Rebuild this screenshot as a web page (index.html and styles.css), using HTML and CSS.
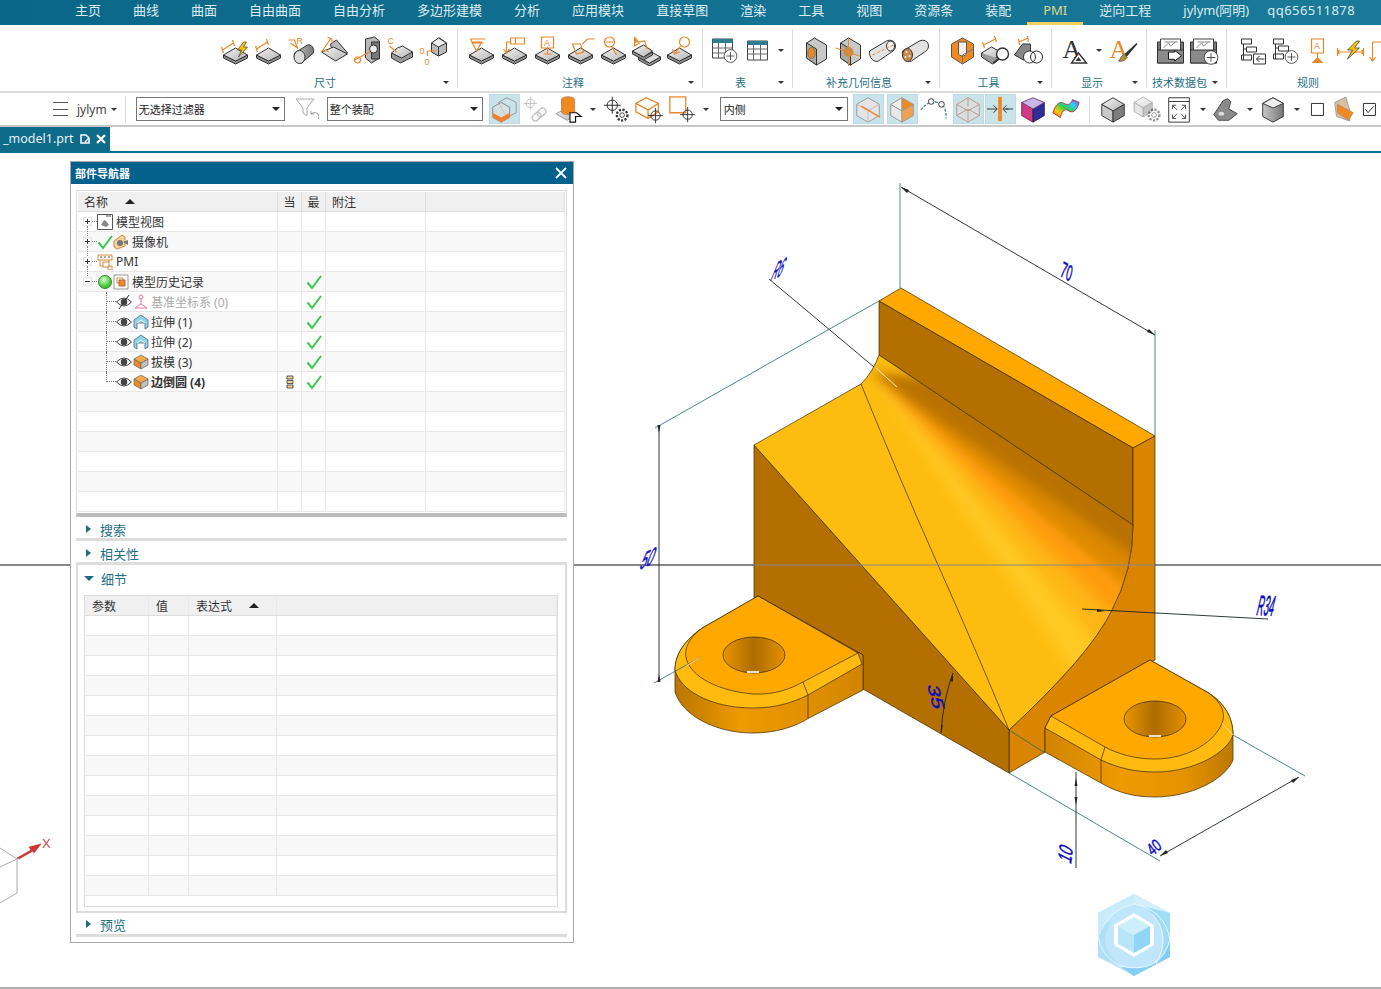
FILE: index.html
```html
<!DOCTYPE html>
<html>
<head>
  <title>PMI - _model1.prt</title>
  <meta charset="utf-8">
  <link rel="stylesheet" href="styles.css">
</head>
<body>
  <!-- shared icon parts -->
  <svg class="defs" width="0" height="0">
    <defs>
      <linearGradient id="gSlab" x1="0" y1="0" x2="1" y2="1"><stop offset="0" stop-color="#f4f4f4"/><stop offset="1" stop-color="#b4b4b4"/></linearGradient>
      <linearGradient id="gSide" x1="0" y1="0" x2="1" y2="0"><stop offset="0" stop-color="#c8c8c8"/><stop offset="1" stop-color="#777"/></linearGradient>
      <linearGradient id="gHole" x1="0" y1="0" x2="1" y2="0"><stop offset="0" stop-color="#e89400"/><stop offset=".5" stop-color="#ad6c00"/><stop offset="1" stop-color="#e49000"/></linearGradient>
      <linearGradient id="gWallL" gradientUnits="userSpaceOnUse" x1="675" y1="0" x2="863" y2="0"><stop offset="0" stop-color="#ba7600"/><stop offset=".35" stop-color="#ee9a00"/><stop offset=".7" stop-color="#e09000"/><stop offset="1" stop-color="#d08400"/></linearGradient>
      <linearGradient id="gWallR" gradientUnits="userSpaceOnUse" x1="1045" y1="0" x2="1233" y2="0"><stop offset="0" stop-color="#d08400"/><stop offset=".4" stop-color="#ee9a00"/><stop offset=".75" stop-color="#e49200"/><stop offset="1" stop-color="#bd7800"/></linearGradient>
      <filter id="soft" x="-20%" y="-20%" width="140%" height="140%"><feGaussianBlur stdDeviation="6"/></filter>
      <clipPath id="slopeClip"><path d="M754 445 861 384Q873 372 879 355L1133 525Q1133 570 1112 610 1090 655 1009 730Z"/></clipPath>
      <symbol id="slab" viewBox="0 0 32 32">
        <path d="M4 21v3l12 6 12-6v-3l-12 6Z" fill="#8f8f8f" stroke="#333"/>
        <path d="M4 21 16 14l12 7-12 6Z" fill="url(#gSlab)" stroke="#333"/>
      </symbol>
      <symbol id="cube" viewBox="0 0 32 32">
        <path d="M4 11v12l12 7V18Z" fill="#c8c8c8" stroke="#333"/>
        <path d="M28 11v12l-12 7V18Z" fill="#7d7d7d" stroke="#333"/>
        <path d="M4 11 16 4l12 7-12 7Z" fill="url(#gSlab)" stroke="#333"/>
      </symbol>
      <symbol id="cross" viewBox="0 0 20 20">
        <circle cx="10" cy="10" r="5.5" fill="none" stroke="#222"/>
        <path d="M10 1v18M1 10h18" stroke="#222" fill="none"/>
      </symbol>
      <symbol id="plus" viewBox="0 0 20 20">
        <circle cx="10" cy="10" r="8" fill="#fff" stroke="#333"/>
        <path d="M10 5v10M5 10h10" stroke="#333"/>
      </symbol>
      <symbol id="gear" viewBox="0 0 20 20">
        <circle cx="10" cy="10" r="6" fill="#fff" stroke="#333" stroke-width="2.6" stroke-dasharray="2.4 1.6"/>
        <circle cx="10" cy="10" r="2.6" fill="#fff" stroke="#333"/>
      </symbol>
      <symbol id="eye" viewBox="0 0 16 16">
        <path d="M.5 8q7.5-8 15 0-7.5 8-15 0Z" fill="#f2f2f2" stroke="#444"/>
        <circle cx="8" cy="8" r="3.2" fill="#444"/>
      </symbol>
      <symbol id="check" viewBox="0 0 16 16">
        <path d="M1.5 8.5 6 14 15 2" fill="none" stroke="#36c84a" stroke-width="2"/>
      </symbol>
      <symbol id="solid" viewBox="0 0 16 16">
        <path d="M1 5v6l7 4V9Z" fill="#f08a1e" stroke="#666" stroke-width=".7"/>
        <path d="M15 5v6l-7 4V9Z" fill="#c2c2c2" stroke="#666" stroke-width=".7"/>
        <path d="M1 5l7-4 7 4-7 4Z" fill="#f6a94a" stroke="#666" stroke-width=".7"/>
      </symbol>
      <symbol id="extrude" viewBox="0 0 16 16">
        <path d="M1 6v7l3 2V9h8v6l3-2V6L8 1Z" fill="#8fd2ea" stroke="#4a6a78" stroke-width=".8"/>
        <path d="M4 9l4-3 4 3" fill="none" stroke="#fff"/>
      </symbol>
    </defs>
  </svg>

  <nav class="menu-bar">
    <a>主页</a><a>曲线</a><a>曲面</a><a>自由曲面</a><a>自由分析</a><a>多边形建模</a><a>分析</a><a>应用模块</a><a>直接草图</a><a>渲染</a><a>工具</a><a>视图</a><a>资源条</a><a>装配</a><a class="active">PMI</a><a>逆向工程</a><a>jylym(阿明)</a><a class="menu-qq">qq656511878</a>
  </nav>

  <section class="ribbon">
    <div class="group group-first">
      <div class="group-icons">
        <svg class="ico" viewBox="0 0 32 32"><use href="#slab"/><path d="M3 16l11-7M2 13l2 6M13 6l2 6" class="or"/><path d="M24 8l-6 8h4l-3 7 9-10h-4l3-5Z" fill="#f6c400" stroke="#444" stroke-width=".7"/></svg>
        <svg class="ico" viewBox="0 0 32 32"><use href="#slab"/><path d="M4 15l11-7M3 12l2 6M14 5l2 6" class="or"/></svg>
        <svg class="ico" viewBox="0 0 32 32"><path d="M9 19 22 11c4-1 7 3 6 8l-12 10c-5 1-8-5-7-10Z" fill="url(#gSide)" stroke="#333"/><ellipse cx="14" cy="23" rx="5.5" ry="6.5" fill="#ddd" stroke="#333"/><path d="M3 6h6l3 8-7-5" class="or"/><text x="11" y="10" class="ico-text">R</text></svg>
        <svg class="ico" viewBox="0 0 32 32"><path d="M12 10 18 6l11 13-13 7Z" fill="#bbb" stroke="#333"/><path d="M3 18l12-5 14 7-12 7Z" fill="url(#gSlab)" stroke="#333"/><path d="M3 18 12 5M9 3l4 2 1 4M5 17c3-2 4 0 5 1" class="or"/></svg>
        <svg class="ico" viewBox="0 0 32 32"><path d="M14 5l9-2 5 4v17l-8 5-6-5Z" fill="#b9b9b9" stroke="#333"/><path d="M20 8h8v17h-8Z" fill="#777" stroke="#333"/><circle cx="22" cy="15" r="4" fill="#eee" stroke="#333"/><path d="M3 26l15-8" class="or"/><circle cx="6" cy="26" r="3" class="or"/></svg>
        <svg class="ico" viewBox="0 0 32 32"><path d="M7 19v5l9 5 12-6v-5Z" fill="#999" stroke="#333"/><path d="M7 19l6-5 5-2 10 6-9 5-2 1Z" fill="url(#gSlab)" stroke="#333"/><path d="M5 12l7 6" class="or"/><text x="3" y="10" class="ico-text">C</text></svg>
        <svg class="ico" viewBox="0 0 32 32"><path d="M14 9v9l7 4 8-4V9l-7-5Z" fill="#bbb" stroke="#333"/><path d="M14 9l7-5 8 5-8 4Z" fill="#eee" stroke="#333"/><path d="M21 13v9" stroke="#333"/><path d="M10 17h8M10 17v5" class="or"/><text x="2" y="20" class="ico-text">0</text><text x="7" y="31" class="ico-text">0</text></svg>
      </div>
      <div class="group-foot"><span>尺寸</span><i class="caret"></i></div>
    </div>
    <div class="group">
      <div class="group-icons">
        <svg class="ico" viewBox="0 0 32 32"><use href="#slab"/><path d="M5 5h15M6 9h12M5 5l6 12 5-9H6" class="or"/></svg>
        <svg class="ico" viewBox="0 0 32 32"><use href="#slab"/><path d="M12 4h14v6H12ZM17 4v6M12 8H8v10" class="or"/><path d="M5 15l3 4 3-4" class="or"/></svg>
        <svg class="ico" viewBox="0 0 32 32"><use href="#slab"/><path d="M10 3h12v11H10ZM16 14v6M12 20h8" class="or"/><text x="12.5" y="12" class="ico-text">A</text></svg>
        <svg class="ico" viewBox="0 0 32 32"><use href="#slab"/><path d="M8 10h8l3 8-7 2ZM18 10l5-5h7" class="or"/></svg>
        <svg class="ico" viewBox="0 0 32 32"><use href="#slab"/><circle cx="12" cy="8" r="5" class="or"/><path d="M8 8h8M14 12l5 9" class="or"/></svg>
        <svg class="ico" viewBox="0 0 32 32"><path d="M8 23v3l11 6 11-6v-3l-11 6Z" fill="#8f8f8f" stroke="#333"/><path d="M8 23l11-6 11 6-11 6Z" fill="#ddd" stroke="#333"/><path d="M2 17v3l11 6 9-5v-3l-9 5Z" fill="#8f8f8f" stroke="#333"/><path d="M2 17l11-6 9 6-9 6Z" fill="url(#gSlab)" stroke="#333"/><path d="M4 3l4 5 6-1 3 8M4 3v9l5-3" class="or"/><path d="M4 4l4 4-4 1Z" fill="#e8882a"/></svg>
        <svg class="ico" viewBox="0 0 32 32"><use href="#slab"/><circle cx="21" cy="8" r="5" class="or"/><path d="M17 12l-5 7M9 15l2 5 5-2" class="or"/></svg>
      </div>
      <div class="group-foot"><span>注释</span><i class="caret"></i></div>
    </div>
    <div class="group">
      <div class="group-icons">
        <svg class="ico" viewBox="0 0 32 32"><path d="M4 5h20v19H4Z" fill="#fff" stroke="#444"/><path d="M4 5h20v4H4Z" fill="#2f7d94"/><path d="M4 14h20M4 19h20M10 9v15M17 9v15" stroke="#666"/><use href="#plus" x="14" y="14" width="16" height="16"/></svg>
        <svg class="ico" viewBox="0 0 32 32"><path d="M6 7h20v19H6Z" fill="#fff" stroke="#444"/><path d="M6 7h20v4H6Z" fill="#2f7d94"/><path d="M6 15h20M6 20h20M12 11v15M19 11v15" stroke="#666"/></svg>
        <i class="caret caret-up"></i>
      </div>
      <div class="group-foot"><span>表</span><i class="caret"></i></div>
    </div>
    <div class="group">
      <div class="group-icons">
        <svg class="ico" viewBox="0 0 32 32"><path d="M6 9l8-5 12 7v14l-10 6-10-7Z" fill="#c8c8c8" stroke="#333"/><path d="M6 9l10 6v16l-10-7Z" fill="#aaa" stroke="#333"/><ellipse cx="11" cy="19" rx="3.6" ry="5.5" fill="#e8882a" stroke="#874"/></svg>
        <svg class="ico" viewBox="0 0 32 32"><path d="M7 9l8-5 12 7v14l-10 6-10-7Z" fill="#c8c8c8" stroke="#333"/><path d="M7 9l10 6v16l-10-7Z" fill="#aaa" stroke="#333"/><circle cx="15" cy="18" r="5" fill="#c98a48"/><path d="M2 14l24 8M15 4v28" stroke="#e8882a"/></svg>
        <svg class="ico" viewBox="0 0 32 32"><path d="M3 17 20 7c4-2 9 0 9 5 0 3-2 5-4 6L12 27c-5 2-10-4-9-10Z" fill="#e2e2e2" stroke="#333"/><ellipse cx="24" cy="12" rx="4" ry="5" fill="#f2f2f2" stroke="#333"/><path d="M6 21 27 11" stroke="#e8882a" stroke-dasharray="3 2"/></svg>
        <svg class="ico" viewBox="0 0 32 32"><path d="M3 17 20 7c4-2 9 0 9 5 0 3-2 5-4 6L12 27c-5 2-10-4-9-10Z" fill="#e2e2e2" stroke="#333"/><ellipse cx="8" cy="21" rx="5" ry="6.5" fill="#c98a48" stroke="#333"/><circle cx="7" cy="18" r="1" fill="#fff"/><circle cx="10" cy="22" r="1" fill="#fff"/><circle cx="6" cy="23" r="1" fill="#fff"/></svg>
      </div>
      <div class="group-foot"><span>补充几何信息</span><i class="caret"></i></div>
    </div>
    <div class="group">
      <div class="group-icons">
        <svg class="ico" viewBox="0 0 32 32"><path d="M5 10l11-6 11 6v13l-11 7-11-7Z" fill="#f08a1e" stroke="#555"/><path d="M12 8h8v11c0 4-8 4-8 0Z" fill="#eee" stroke="#555"/><path d="M16 30V21l11-6" stroke="#777" fill="none"/></svg>
        <svg class="ico" viewBox="0 0 32 32"><path d="M2 19l10-6 11 6-10 7Z" fill="url(#gSlab)" stroke="#333"/><path d="M2 19v4l11 7 7-5" fill="#999" stroke="#333"/><path d="M4 11l12-6M3 8l2 6M15 2l2 6" class="or"/><circle cx="23" cy="20" r="6" fill="#fff" stroke="#333" stroke-width="1.4"/><path d="M19 25l-5 4" stroke="#333" stroke-width="2"/></svg>
        <svg class="ico" viewBox="0 0 32 32"><path d="M2 21 10 10h8v10l-7 6Z" fill="#888" stroke="#333"/><path d="M6 8l10-4M6 5l1 6M15 2l1 6" class="or"/><circle cx="17" cy="23" r="6" fill="#fff" stroke="#222" stroke-opacity=".9"/><circle cx="24" cy="23" r="6" fill="none" stroke="#222"/></svg>
      </div>
      <div class="group-foot"><span>工具</span><i class="caret"></i></div>
    </div>
    <div class="group">
      <div class="group-icons">
        <svg class="ico" viewBox="0 0 32 32"><text x="3" y="24" class="ico-big">A</text><path d="M19 19l8 10H12Z" fill="#fff" stroke="#333" stroke-width="1.4"/><path d="M19 23l3 4h-6Z" fill="#333"/></svg>
        <i class="caret caret-up"></i>
        <svg class="ico" viewBox="0 0 32 32"><text x="3" y="24" class="ico-big ico-orange">A</text><path d="M30 9 18 20l2 3 11-13Z" fill="#333"/><path d="M18 20c-3 1-3 4-6 7 4 1 8-1 8-4Z" fill="#b89238" stroke="#765"/></svg>
      </div>
      <div class="group-foot"><span>显示</span><i class="caret"></i></div>
    </div>
    <div class="group">
      <div class="group-icons">
        <svg class="ico" viewBox="0 0 32 32"><path d="M3 8h26v21H3Z" fill="#777" stroke="#333"/><path d="M6 5h20v15H6Z" fill="#fff" stroke="#444"/><path d="M9 14l5-5 2 3 5-4M10 8h13" stroke="#888" fill="none"/><path d="M3 16h26v13H3Z" fill="#8a8a8a" stroke="#333"/><path d="M16 19h6v-2l7 6-7 6v-2h-6Z" transform="translate(-2 1) scale(1 .9)" fill="#fff" stroke="#111"/></svg>
        <svg class="ico" viewBox="0 0 32 32"><path d="M3 8h26v21H3Z" fill="#777" stroke="#333"/><path d="M6 5h20v15H6Z" fill="#fff" stroke="#444"/><path d="M9 14l5-5 2 3 5-4M10 8h13" stroke="#888" fill="none"/><path d="M3 16h26v13H3Z" fill="#8a8a8a" stroke="#333"/><use href="#plus" x="15" y="15" width="17" height="17"/></svg>
      </div>
      <div class="group-foot"><span>技术数据包</span><i class="caret"></i></div>
    </div>
    <div class="group group-last">
      <div class="group-icons">
        <svg class="ico" viewBox="0 0 32 32"><path d="M6 5h10v5H6ZM11 13h10v5H11ZM6 21h10v5H6ZM8 10v16M8 15h3" fill="#fff" stroke="#333"/><path d="M18 20h12v10H18Z" fill="#fff" stroke="#333"/><path d="M21 25h8M24 22l-3 3 3 3" fill="none" stroke="#333"/></svg>
        <svg class="ico" viewBox="0 0 32 32"><path d="M5 5h10v5H5ZM10 12h10v5H10ZM5 20h10v5H5ZM7 10v15M7 14h3" fill="#fff" stroke="#333"/><use href="#plus" x="15" y="15" width="16" height="16"/></svg>
        <svg class="ico" viewBox="0 0 32 32"><path d="M10 5h12v14H10Z" fill="#fff" class="or"/><path d="M16 19v7" class="or"/><path d="M10 29l6-6 6 6Z" fill="#e8882a"/><text x="12.5" y="15" class="ico-text">A</text></svg>
        <svg class="ico" viewBox="0 0 32 32"><path d="M3 18h26M3 14v8M29 14v8M5 16l-2 2 2 2M27 16l2 2-2 2" class="or"/><path d="M22 7l-9 9h5l-5 9 12-11h-5l5-7Z" fill="#f6c400" stroke="#444" stroke-width=".8"/></svg>
        <svg class="ico" viewBox="0 0 32 32"><path d="M5 8V26M2 23l3 4 3-4M5 8h10" class="or"/></svg>
      </div>
      <div class="group-foot"><span>规则</span></div>
    </div>
  </section>

  <section class="toolbar">
    <span class="burger"></span>
    <span class="role">jylym</span><i class="caret caret-role"></i>
    <span class="bar-sep sep-role"></span>
    <div class="select select-filter"><span>无选择过滤器</span><i class="caret caret-dark"></i></div>
    <svg class="funnel" viewBox="0 0 24 24"><path d="M1 2h18l-7 9v8l-4-3v-5Z" fill="#fff" stroke="#aaa"/><path d="M23 22a4 4 0 0 0-5-6l-2 1m0-3v3h3" fill="none" stroke="#999"/></svg>
    <div class="select select-scope"><span>整个装配</span><i class="caret caret-dark"></i></div>

    <button class="tool on"><svg class="ico" viewBox="0 0 32 32"><path d="M10 9l9-5 10 5v11l-10 5Z" fill="none" stroke="#999"/><path d="M4 14l9-5 9 5v11l-9 5-9-5Z" fill="#ddd" fill-opacity=".6" stroke="#888"/><path d="M4 20l9 5 9-5v5l-9 5-9-5Z" fill="#f5822a"/></svg></button>
    <button class="tool"><svg class="ico" viewBox="0 0 32 32" opacity=".35"><use href="#cross" x="2" y="2" width="16" height="16"/><g transform="rotate(-40 20 22)"><rect x="11" y="18" width="10" height="7" rx="3.5" fill="none" stroke="#555" stroke-width="1.5"/><rect x="18" y="18" width="10" height="7" rx="3.5" fill="none" stroke="#555" stroke-width="1.5"/></g></svg></button>
    <button class="tool"><svg class="ico" viewBox="0 0 32 32"><path d="M2 21l12-6 12 6-12 7Z" fill="url(#gSlab)" stroke="#999"/><path d="M8 6c0-4 14-4 14 0v13c0 4-14 4-14 0Z" fill="#f08a1e" stroke="#b86"/><path d="M17 30V20h7l5 4h-6v6Z" fill="#fff" stroke="#111" stroke-width="1.2"/></svg></button>
    <i class="caret caret-box"></i>
    <button class="tool"><svg class="ico" viewBox="0 0 32 32"><use href="#cross" x="2" y="2" width="20" height="20"/><use href="#gear" x="13" y="13" width="19" height="19"/></svg></button>
    <button class="tool"><svg class="ico" viewBox="0 0 32 32"><path d="M2 10l11-6 13 6v9l-11 7-13-7Z" fill="#fff" stroke="#e8882a" stroke-width="1.4"/><path d="M2 10l13 7 11-7M15 17v9" fill="none" stroke="#e8882a" stroke-width="1.4"/><use href="#cross" x="14" y="14" width="18" height="18"/></svg></button>
    <button class="tool"><svg class="ico" viewBox="0 0 32 32"><path d="M3 3h17v17H3Z" fill="#fff" stroke="#e8882a" stroke-width="1.4"/><use href="#cross" x="13" y="13" width="18" height="18"/></svg></button>
    <i class="caret caret-box"></i>
    <div class="select select-side"><span>内侧</span><i class="caret caret-dark"></i></div>

    <button class="tool on"><svg class="ico" viewBox="0 0 32 32"><path d="M4 11v12l12 7 12-7V11L16 4Z" fill="#e4e4e4" stroke="#999"/><path d="M4 11l12 7 12-7M16 18v12" fill="none" stroke="#bbb"/><path d="M9 13l20 12" stroke="#e8882a" stroke-width="1.5"/></svg></button>
    <button class="tool on tight"><svg class="ico" viewBox="0 0 32 32"><path d="M4 11v12l12 7V18Z" fill="#e8e8e8" stroke="#999"/><path d="M16 4 4 11l12 7Z" fill="#eee" stroke="#999"/><path d="M28 11v12l-12 7V18Z" fill="#f0a050" stroke="#999"/><path d="M16 4l12 7-12 7Z" fill="#f08a1e" stroke="#999"/></svg></button>
    <button class="tool"><svg class="ico" viewBox="0 0 32 32"><path d="M2 17Q14 2 26 13q3 4 3 13" fill="none" stroke="#2a7f9a" stroke-width="1.3" stroke-dasharray="3 1.5"/><circle cx="13" cy="8" r="3" fill="#fff" stroke="#333"/><circle cx="24" cy="11" r="3" fill="#fff" stroke="#333"/></svg></button>
    <button class="tool on tight-2"><svg class="ico" viewBox="0 0 32 32"><path d="M4 11v12l12 7 12-7V11L16 4Z" fill="#ddd" fill-opacity=".7" stroke="#b98"/><path d="M4 11l12 7 12-7M16 18v12M16 4v9M4 23l12-7 12 7" fill="none" stroke="#b98"/></svg></button>
    <button class="tool on tight-1"><svg class="ico" viewBox="0 0 32 32"><path d="M14 3h4v26h-4Z" fill="#f08a1e"/><path d="M2 16h11M25 16h-5M30 16h-8M9 12l4 4-4 4M23 12l-4 4 4 4" fill="none" stroke="#333"/></svg></button>
    <button class="tool"><svg class="ico" viewBox="0 0 32 32"><path d="M4 9v14l12 7V16Z" fill="#d03a88" stroke="#822"/><path d="M28 9v14l-12 7V16Z" fill="#2d2d9c" stroke="#224"/><path d="M4 9l12-5 12 5-12 7Z" fill="#c9b6e8" stroke="#647"/></svg></button>
    <button class="tool"><svg class="ico" viewBox="0 0 32 32"><defs><linearGradient id="gBow" x1="0" y1="1" x2="1" y2="0"><stop offset="0" stop-color="#e33"/><stop offset=".25" stop-color="#fc0"/><stop offset=".5" stop-color="#3c5"/><stop offset=".75" stop-color="#3cf"/><stop offset="1" stop-color="#83e"/></linearGradient></defs><path d="M2 20C6 8 11 8 14 10s7 2 9-4l7 3c-3 11-8 11-11 9s-7-2-9 7Z" fill="url(#gBow)" stroke="#a33"/></svg></button>
    <span class="bar-sep sep-mid"></span>
    <button class="tool"><svg class="ico" viewBox="0 0 32 32"><use href="#cube"/></svg></button>
    <button class="tool"><svg class="ico" viewBox="0 0 32 32" opacity=".45"><use href="#cube" width="26" height="26"/></svg><svg class="ico-over" viewBox="0 0 20 20"><use href="#gear" opacity=".55"/></svg></button>
    <button class="tool"><svg class="ico" viewBox="0 0 32 32"><path d="M5 4h22v26H5ZM5 8h22" fill="#fff" stroke="#333"/><path d="M9 12l5 5M9 12v4M9 12h4M23 12l-5 5M23 12v4M23 12h-4M9 26l5-5M9 26v-4M9 26h4M23 26l-5-5M23 26v-4M23 26h-4" fill="none" stroke="#444"/></svg></button>
    <i class="caret caret-box"></i>
    <button class="tool"><svg class="ico" viewBox="0 0 32 32"><path d="M3 22 13 7l5-2 3 3-2 8 9 5-9 7H8Z" fill="#8a8a8a" stroke="#444"/><ellipse cx="11" cy="21" rx="3" ry="2" fill="#ddd"/></svg></button>
    <i class="caret caret-box"></i>
    <button class="tool"><svg class="ico" viewBox="0 0 32 32"><path d="M5 10v14l11 6 11-6V10L16 4Z" fill="url(#gSide)" stroke="#333"/><path d="M5 10l11 5 11-5L16 4Z" fill="#eee" stroke="#333"/></svg></button>
    <i class="caret caret-box"></i>
    <button class="tool small"><svg class="ico" viewBox="0 0 26 32"><path d="M7 10h13v13H7Z" fill="#fff" stroke="#222"/></svg></button>
    <button class="tool small"><svg class="ico" viewBox="0 0 26 32"><path d="M16 3 4 9l2 15 14 5 1-9Z" fill="#d8c0a0" stroke="#999"/><path d="M7 11l17 9-5 8-12-8Z" fill="#f08a1e" stroke="#b86"/></svg></button>
    <button class="tool small"><svg class="ico" viewBox="0 0 26 32"><path d="M7 10h13v13H7Z" fill="#fff" stroke="#222"/><path d="M9 16l3 4 6-7" fill="none" stroke="#222"/></svg></button>
  </section>

  <div class="tabs">
    <div class="tab">
      <span>_model1.prt</span>
      <svg class="tab-doc" viewBox="0 0 12 12"><path d="M2 2h5l3 3v5H2Z" fill="none" stroke="#fff" stroke-width="1.5"/><path d="M6 9l4-4" stroke="#fff" stroke-width="1.5"/></svg>
      <svg class="tab-close" viewBox="0 0 10 10"><path d="M1 1l8 8M9 1 1 9" stroke="#fff" stroke-width="2.2"/></svg>
    </div>
  </div>

  <main class="canvas">
    <svg class="scene" viewBox="0 153 1381 836" width="1381" height="836">
      <path d="M0 565H1381" stroke="#111" stroke-width="1.2"/>

      <!-- triad -->
      <path d="M0 848 17 859M0 867 17 859V893L0 903" fill="none" stroke="#aaa"/>
      <path d="M17 858 31 850l-2-3 12-3-7 9-1-2-14 8Z" fill="#d8332f" stroke="#a22" stroke-width=".5"/>
      <text x="42" y="848" class="axis">X</text>

      <!-- main body -->
      <path d="M901 288 1155 436 1133 448 879 301Z" fill="#ffa900" stroke="#3a2a00" stroke-width=".7"/>
      <path d="M879 301 1133 448V525L879 355Z" fill="#b36f00" stroke="#3a2a00" stroke-width=".7"/>
      <path d="M1133 448 1155 436V660L1051 716 1045 728V752L1009 773V730Q1090 655 1112 610 1133 570 1133 525Z" fill="#d98500" stroke="#3a2a00" stroke-width=".7"/>
      <path d="M754 445 1009 730V773L863 689V655L758 596 754 598Z" fill="#b36f00" stroke="#3a2a00" stroke-width=".7"/>
      <g clip-path="url(#slopeClip)">
        <path d="M740 340H1160V760H740Z" fill="#fdbd10"/>
        <g filter="url(#soft)">
          <path d="M870 372 1150 787 1191 755Z" fill="#ffc822"/>
          <path d="M870 372 1191 755 1224 726Z" fill="#fdb612"/>
          <path d="M870 372 1224 726 1253 693Z" fill="#ff9c08"/>
          <path d="M870 372 1253 693 1280 659Z" fill="#dc8800"/>
          <path d="M870 372 1280 659 1327 575 1200 400Z" fill="#b97200"/>
        </g>
      </g>
      <path d="M754 445 861 384Q873 372 879 355L1133 525Q1133 570 1112 610 1090 655 1009 730Z" fill="none" stroke="#3a2a00" stroke-width=".7"/>
      <path d="M861 384Q900 480 938 565T1009 730" fill="none" stroke="#3a2a00" stroke-width=".7"/>
      <path d="M876 368 897 387" stroke="#ffe7c0" stroke-width="1"/>
      <path d="M754 565H1155" stroke="#8a8a8a" stroke-width="1.2"/>

      <!-- left ear -->
      <path d="M758 596 704 627C684 640 675 655 675 670V692C682 715 715 733 753 733 775 733 795 727 809 718L863 690V655Z" fill="url(#gWallL)" stroke="#3a2a00" stroke-width=".7"/>
      <path d="M704 627C684 640 675 655 675 670 680 690 710 708 753 708 775 708 792 703 808 695L862 664 858 653Z" fill="#ffbb10" stroke="#3a2a00" stroke-width=".7"/>
      <path d="M758 596 704 627C690 636 684 648 686 657 688 672 710 690 753 694 775 695 790 689 803 682L858 653Z" fill="#ffa900" stroke="#3a2a00" stroke-width=".7"/>
      <path d="M803 682 808 695V718" fill="none" stroke="#3a2a00" stroke-width=".7"/>
      <ellipse cx="754" cy="655" rx="31" ry="18" fill="url(#gHole)" stroke="#3a2a00" stroke-width=".7"/>
      <path d="M747 672h12" stroke="#fff" stroke-width="1.6"/>

      <!-- right ear -->
      <path d="M1150 660 1207 692C1225 703 1233 718 1233 735V760C1225 780 1190 797 1155 797 1135 797 1118 793 1101 783L1045 752V728L1051 716Z" fill="url(#gWallR)" stroke="#3a2a00" stroke-width=".7"/>
      <path d="M1207 692C1225 703 1233 718 1233 735 1228 752 1195 772 1155 772 1135 772 1118 768 1101 760L1045 728 1051 716Z" fill="#ffbb10" stroke="#3a2a00" stroke-width=".7"/>
      <path d="M1150 660 1207 692C1222 702 1226 714 1222 723 1216 740 1190 759 1155 759 1135 759 1118 754 1105 747L1051 716Z" fill="#ffa900" stroke="#3a2a00" stroke-width=".7"/>
      <path d="M1105 747 1101 760V783" fill="none" stroke="#3a2a00" stroke-width=".7"/>
      <ellipse cx="1155" cy="719" rx="31" ry="18" fill="url(#gHole)" stroke="#3a2a00" stroke-width=".7"/>
      <path d="M1149 736h12" stroke="#fff" stroke-width="1.6"/>

      <!-- extension lines -->
      <g class="ext">
        <path d="M900 183V288M1155 330V436M879 301 655 428M699 658 654 683M1009 730 1045 753M1009 773 1160 861M1233 735 1305 776"/>
      </g>
      <path d="M699 658 686 666M1222 723 1233 735" stroke="#ffe7c0" stroke-width=".8"/>
      <!-- dimension lines -->
      <g class="dim">
        <path d="M901 187 1155 335M769 279 874 367M659 427V680M1076 772V868M1082 609 1268 619M1160 856 1299 777"/>
        <path d="M953 673Q943 700 941 733"/>
      </g>
      <g class="arrow">
        <path d="M901 187l8 3-2 3ZM1155 335l-8-3 2-3ZM659 433l-1.500-8h3ZM659 674l-1.500 8h3ZM1076 778l-1.500 8h3ZM1076 805l-1.500-8h3ZM1105 611l-8-2v3ZM1160 856l8-3-2-3ZM1299 777l-8 3 2 3ZM953 673l-3 8 3 .5ZM941 733l0-8 2 .3Z"/>
      </g>
      <text class="dim-text" transform="matrix(.47 .27 -.19 1.1 1060 276)">70</text>
      <text class="dim-text" transform="matrix(.42 -.2 -.5 1.35 770 281)">R6</text>
      <text class="dim-text" transform="matrix(.58 -.28 -.4 1.25 639 570)">50</text>
      <text class="dim-text" transform="matrix(.46 .02 -.25 1.4 1256 615)">R34</text>
      <text class="dim-text" transform="matrix(.3 1.1 -.8 .08 927 685)">35</text>
      <text class="dim-text" transform="matrix(.08 -.7 .95 .35 1071 864)">10</text>
      <text class="dim-text" transform="matrix(.44 -.4 .6 .6 1153 856)">40</text>

      <!-- watermark logo -->
      <path d="M1134 894 1170 913V957L1134 976 1098 957V913Z" fill="#bfe6fa"/>
      <path d="M1134 894 1170 913V940Q1165 910 1134 904 1115 904 1105 916Z" fill="#d4effc"/>
      <path d="M1170 913V957L1156 964Q1172 935 1152 914 1145 905 1134 904Z" fill="#9edcf8"/>
      <path d="M1170 940V957L1134 976 1120 966Q1160 975 1170 940Z" fill="#84cdf3"/>
      <path d="M1098 913 1134 894V904Q1110 908 1098 936Z" fill="#c9ecfb"/>
      <path d="M1098 936V957L1120 966Q1095 945 1112 920 1100 925 1098 936Z" fill="#aee0f8"/>
      <path d="M1134 904Q1165 910 1170 940M1098 936Q1110 908 1134 904M1120 966Q1160 975 1170 940M1098 936Q1100 955 1120 966M1152 914Q1172 935 1156 964" fill="none" stroke="#eaf8fe" stroke-width="1"/>
      <path d="M1134 913 1154 925V945L1134 957 1114 945V925Z" fill="#fff"/>
      <path d="M1134 917 1150 926 1134 935 1118 926Z" fill="#cdeefb"/>
      <path d="M1118 926 1134 935V953L1118 944Z" fill="#b9e5f9"/>
      <path d="M1150 926 1134 935V953L1150 944Z" fill="#91d5f4"/>
    </svg>

    <aside class="nav-panel">
      <header class="nav-title">
        <span>部件导航器</span>
        <svg class="nav-close" viewBox="0 0 12 12"><path d="M1 1l10 10M11 1 1 11" stroke="#fff" stroke-width="1.8"/></svg>
      </header>

      <div class="tree-box">
        <div class="row head">
          <span class="cell-name">名称<i class="sort sort-name"></i></span><span>当</span><span>最</span><span class="cell-note">附注</span><span></span>
        </div>
        <div class="row">
          <span class="cell-name"><i class="expander"></i><svg class="node" viewBox="0 0 16 16"><path d="M.5 .5h15v15H.5Z" fill="#fff" stroke="#555"/><path d="M9 2h5" stroke="#555"/><path d="M4 11l3-5 2 1 3 4-3 2Z" fill="#888"/></svg><b class="name gap-3">模型视图</b></span><span></span><span></span><span></span><span></span>
        </div>
        <div class="row">
          <span class="cell-name"><i class="expander"></i><svg class="node" viewBox="0 0 16 16"><use href="#check"/></svg><svg class="node" viewBox="0 0 16 16"><path d="M1 7l8-6 3 2v9l-8 3-3-2Z" fill="#f6d2a0" stroke="#d68a3a"/><circle cx="7" cy="9" r="3" fill="#777"/><path d="M10 8l5-2v5Z" fill="#777"/></svg><b class="name gap-3">摄像机</b></span><span></span><span></span><span></span><span></span>
        </div>
        <div class="row">
          <span class="cell-name"><i class="expander"></i><svg class="node" viewBox="0 0 16 16"><path d="M1 1h14v5H1ZM6 8h6v5H6ZM11 12h4v4h-4ZM3 6v6h3M12 6v2" fill="#fff" stroke="#d68a3a"/><path d="M3 3h2M7 3h2M11 3h2" stroke="#555"/></svg><b class="name gap-3">PMI</b></span><span></span><span></span><span></span><span></span>
        </div>
        <div class="row">
          <span class="cell-name"><i class="expander minus"></i><span class="ball"></span><svg class="node" viewBox="0 0 16 16"><path d="M1 1h14v14H1Z" fill="#fff" stroke="#999"/><path d="M4 4h6v5H4Z" fill="#fff" stroke="#d68a3a"/><path d="M6 6h6v6H6Z" fill="#f08a1e" stroke="#a65"/></svg><b class="name gap-3">模型历史记录</b></span><span></span><span><svg class="tick" viewBox="0 0 16 16"><use href="#check"/></svg></span><span></span><span></span>
        </div>
        <div class="row">
          <span class="cell-name"><i class="branch"></i><svg class="node eye" viewBox="0 0 16 16"><use href="#eye"/><path d="M13 1 3 15" stroke="#333"/></svg><svg class="node" viewBox="0 0 16 16"><path d="M8 4v6M8 10l-6 4M8 10l6 4M2 14h12" fill="none" stroke="#e3779b"/><circle cx="8" cy="3" r="2" fill="none" stroke="#e3779b"/></svg><b class="name gap-2 muted">基准坐标系 (0)</b></span><span></span><span><svg class="tick" viewBox="0 0 16 16"><use href="#check"/></svg></span><span></span><span></span>
        </div>
        <div class="row">
          <span class="cell-name"><i class="branch"></i><svg class="node eye" viewBox="0 0 16 16"><use href="#eye"/></svg><svg class="node" viewBox="0 0 16 16"><use href="#extrude"/></svg><b class="name gap-2">拉伸 (1)</b></span><span></span><span><svg class="tick" viewBox="0 0 16 16"><use href="#check"/></svg></span><span></span><span></span>
        </div>
        <div class="row">
          <span class="cell-name"><i class="branch"></i><svg class="node eye" viewBox="0 0 16 16"><use href="#eye"/></svg><svg class="node" viewBox="0 0 16 16"><use href="#extrude"/></svg><b class="name gap-2">拉伸 (2)</b></span><span></span><span><svg class="tick" viewBox="0 0 16 16"><use href="#check"/></svg></span><span></span><span></span>
        </div>
        <div class="row">
          <span class="cell-name"><i class="branch"></i><svg class="node eye" viewBox="0 0 16 16"><use href="#eye"/></svg><svg class="node" viewBox="0 0 16 16"><use href="#solid"/></svg><b class="name gap-2">拔模 (3)</b></span><span></span><span><svg class="tick" viewBox="0 0 16 16"><use href="#check"/></svg></span><span></span><span></span>
        </div>
        <div class="row">
          <span class="cell-name"><i class="branch last"></i><svg class="node eye" viewBox="0 0 16 16"><use href="#eye"/></svg><svg class="node" viewBox="0 0 16 16"><use href="#solid"/></svg><b class="name gap-2 bold">边倒圆 (4)</b></span><span><svg class="dep" viewBox="0 0 8 14"><path d="M1 1h6v3H1ZM1 5.5h6v3H1ZM1 10h6v3H1Z" fill="#f6d2a0" stroke="#333" stroke-width=".8"/></svg></span><span><svg class="tick" viewBox="0 0 16 16"><use href="#check"/></svg></span><span></span><span></span>
        </div>
        <div class="row"><span></span><span></span><span></span><span></span><span></span></div>
        <div class="row"><span></span><span></span><span></span><span></span><span></span></div>
        <div class="row"><span></span><span></span><span></span><span></span><span></span></div>
        <div class="row"><span></span><span></span><span></span><span></span><span></span></div>
        <div class="row"><span></span><span></span><span></span><span></span><span></span></div>
        <div class="row"><span></span><span></span><span></span><span></span><span></span></div>
      </div>

      <div class="section"><i class="tri"></i>搜索</div>
      <div class="section"><i class="tri"></i>相关性</div>
      <div class="details">
        <div class="section section-open"><i class="tri tri-down"></i>细节</div>
        <div class="param-table">
          <div class="param head"><span>参数</span><span>值</span><span>表达式<i class="sort sort-expr"></i></span><span></span></div>
          <div class="param"><span></span><span></span><span></span><span></span></div>
          <div class="param"><span></span><span></span><span></span><span></span></div>
          <div class="param"><span></span><span></span><span></span><span></span></div>
          <div class="param"><span></span><span></span><span></span><span></span></div>
          <div class="param"><span></span><span></span><span></span><span></span></div>
          <div class="param"><span></span><span></span><span></span><span></span></div>
          <div class="param"><span></span><span></span><span></span><span></span></div>
          <div class="param"><span></span><span></span><span></span><span></span></div>
          <div class="param"><span></span><span></span><span></span><span></span></div>
          <div class="param"><span></span><span></span><span></span><span></span></div>
          <div class="param"><span></span><span></span><span></span><span></span></div>
          <div class="param"><span></span><span></span><span></span><span></span></div>
          <div class="param"><span></span><span></span><span></span><span></span></div>
          <div class="param"><span></span><span></span><span></span><span></span></div>
        </div>
      </div>
      <div class="section section-last"><i class="tri"></i>预览</div>
    </aside>
  </main>
</body>
</html>
```

FILE: styles.css
```css
html, body {
  margin: 0;
  height: 100%;
  overflow: hidden;
}

body {
  display: flex;
  flex-direction: column;
  background-color: #fff;
  color: #333;
  font-family: "Noto Sans", "Noto Sans CJK SC", sans-serif;
  font-size: 12px;
}

.defs {
  position: absolute;
}

/* top menu */
.menu-bar {
  display: flex;
  flex: none;
  height: 25px;
  padding-left: 59px;
  background: linear-gradient(to right, #0b6788, #1a7a99);
  color: #dcecf1;
  font-size: 13px;
  line-height: 20px;
  white-space: nowrap;
  box-sizing: border-box;
}

.menu-bar a {
  padding: 0 16px;
}

.menu-bar .active {
  color: #d8d88a;
  border-bottom: 3px solid #f0d264;
}

.menu-bar .menu-qq {
  margin-left: -14px;
  letter-spacing: .45px;
}

/* ribbon */
.ribbon {
  display: grid;
  flex: none;
  grid-template-columns: 458px 245px 90px 147px 112px 95px 80px minmax(0, 1fr);
  height: 68px;
  border-bottom: 2px solid #ddd;
  box-sizing: border-box;
  overflow: hidden;
}

.group {
  display: flex;
  flex-direction: column;
  margin-top: 4px;
  border-right: 1px solid #ddd;
  box-sizing: border-box;
  height: 59px;
}

.group-first {
  padding-left: 207px;
}

.group-last {
  border-right: none;
}

.group-icons {
  display: flex;
  justify-content: center;
  align-items: center;
  height: 32px;
  margin-top: 5px;
}

.group-first .group-icons {
  justify-content: flex-end;
  padding-right: 7px;
}

.group-last .group-icons {
  justify-content: flex-start;
  padding-left: 8px;
}

.group-foot {
  display: flex;
  align-items: center;
  margin-top: 8px;
  height: 18px;
  color: #1f6f86;
  font-size: 11px;
}

.group-foot span {
  flex: 1;
  text-align: center;
}

.group-last .group-foot {
  padding-left: 8px;
}

.ico {
  display: block;
  flex: none;
  width: 33px;
  height: 32px;
}

.or {
  fill: none;
  stroke: #e8882a;
  stroke-width: 1.2;
}

.ico-text {
  fill: #e8882a;
  font-size: 9px;
  font-family: "Liberation Sans", sans-serif;
}

.ico-big {
  fill: #333;
  font-size: 26px;
  font-family: "Liberation Serif", serif;
}

.ico-orange {
  fill: #e8882a;
}

.caret {
  flex: none;
  display: block;
  width: 0;
  height: 0;
  margin-right: 8px;
  border-top: 3px solid #333;
  border-left: 3px solid transparent;
  border-right: 3px solid transparent;
}

.caret-up {
  margin: 0 4px;
}

.caret-dark {
  margin: 0 4px 0 0;
  border-top-width: 4px;
  border-left-width: 4px;
  border-right-width: 4px;
  border-top-color: #222;
}

.caret-box {
  margin: 0 4px;
}

.caret-role {
  margin: 0;
}

/* selection toolbar */
.toolbar {
  display: flex;
  flex: none;
  align-items: center;
  height: 34px;
  padding-left: 53px;
  border-bottom: 2px solid #c8c8c8;
  box-sizing: border-box;
  white-space: nowrap;
}

.burger {
  flex: none;
  width: 15px;
  height: 12px;
  border-top: 1px solid #555;
  border-bottom: 1px solid #555;
  background: linear-gradient(#555, #555) center / 100% 1px no-repeat;
}

.role {
  margin: 0 4px 0 9px;
  font-size: 12px;
  color: #444;
}

.bar-sep {
  flex: none;
  width: 1px;
  height: 27px;
  background-color: #ddd;
}

.sep-role {
  margin: 0 10px 0 8px;
}

.sep-mid {
  margin: 0 7px 0 6px;
}

.select {
  display: flex;
  flex: none;
  align-items: center;
  justify-content: space-between;
  height: 24px;
  padding-left: 2px;
  border: 1px solid #777;
  background-color: #fff;
  box-sizing: border-box;
  color: #222;
  font-size: 11px;
}

.select-filter {
  width: 149px;
}

.funnel {
  flex: none;
  width: 24px;
  height: 24px;
  margin: 0 8px 0 10px;
}

.select-scope {
  width: 156px;
  margin-right: 6px;
}

.select-side {
  width: 128px;
  margin: 0 5px 0 7px;
  padding-left: 3px;
}

.tool {
  position: relative;
  flex: none;
  width: 33px;
  height: 30px;
  padding: 0;
  border: none;
  background: none;
  display: flex;
  align-items: center;
  justify-content: center;
}

.tool .ico {
  width: 30px;
  height: 30px;
}

.tool.on {
  width: 31px;
  background-color: #c9e3ea;
  border: 1px solid #bcdbe4;
  box-sizing: border-box;
}

.tool.tight {
  margin-left: 3px;
}

.tool.tight-2 {
  margin-left: 2px;
}

.tool.tight-1 {
  margin-left: 1px;
  margin-right: 1px;
}

.tool.small {
  width: 26px;
}

.tool.small .ico {
  width: 24px;
}

.ico-over {
  position: absolute;
  right: 0;
  bottom: 0;
  width: 18px;
  height: 18px;
}

/* document tabs */
.tabs {
  flex: none;
  height: 26px;
  border-bottom: 2px solid #0f6b8a;
  box-sizing: border-box;
}

.tab {
  display: flex;
  align-items: center;
  width: 110px;
  height: 24px;
  padding: 0 0 1px 3px;
  background-color: #0f6b8a;
  box-sizing: border-box;
  color: #e6f1f4;
  font-size: 12.5px;
}

.tab-doc {
  width: 12px;
  height: 12px;
  margin-left: 5px;
}

.tab-close {
  width: 10px;
  height: 10px;
  margin-left: 5px;
}

/* model canvas */
.canvas {
  position: relative;
  flex: 1;
  border-bottom: 2px solid #b0b0b0;
  height: 0;
}

.scene {
  position: absolute;
  left: 0;
  top: 0;
}

.axis {
  fill: #c8484a;
  font-family: "Liberation Sans", sans-serif;
  font-size: 13px;
}

.ext path {
  fill: none;
  stroke: #1e6a76;
  stroke-width: .8;
}

.dim path {
  fill: none;
  stroke: #1a2226;
  stroke-width: .9;
}

.arrow path {
  fill: #222;
}

.dim-text {
  fill: #0c0cc0;
  stroke: #0c0cc0;
  stroke-width: .5;
  font-family: "Liberation Sans", sans-serif;
  font-size: 20px;
  font-style: italic;
}

/* part navigator */
.nav-panel {
  position: absolute;
  left: 70px;
  top: 8px;
  display: flex;
  flex-direction: column;
  width: 504px;
  height: 782px;
  border: 1px solid #a8a8a8;
  background-color: #fff;
  box-sizing: border-box;
}

.nav-title {
  display: flex;
  flex: none;
  align-items: center;
  justify-content: space-between;
  height: 22px;
  padding: 0 6px 0 4px;
  background-color: #04618b;
  color: #fff;
  font-size: 11px;
  font-weight: bold;
}

.nav-close {
  width: 12px;
  height: 12px;
}

.tree-box {
  flex: none;
  height: 327px;
  margin: 6px 6px 0 5px;
  padding: 1px;
  border: 1px solid #ddd;
  border-bottom: 4px solid #bcbcbc;
  box-sizing: border-box;
  overflow: hidden;
}

.row {
  display: grid;
  grid-template-columns: 200px 24px 24px 100px 1fr;
  height: 20px;
  border-bottom: 1px solid #e8e8e8;
  box-sizing: border-box;
}

.row:nth-child(odd) {
  background-color: #f8f8f8;
}

.row > span {
  display: flex;
  align-items: center;
  justify-content: center;
  border-right: 1px solid #e8e8e8;
}

.row > .cell-name {
  justify-content: flex-start;
  padding-left: 5px;
}

.row > .cell-note {
  justify-content: flex-start;
  padding-left: 6px;
}

.row.head {
  background-color: #f0f0f0;
  border-bottom: 1px solid #ddd;
  color: #333;
}

.row.head > span {
  border-right: 1px solid #ddd;
}

.row.head > .cell-name {
  padding-left: 6px;
}

.sort {
  display: inline-block;
  width: 0;
  height: 0;
  border-bottom: 5px solid #222;
  border-left: 5px solid transparent;
  border-right: 5px solid transparent;
}

.sort-name {
  margin-left: 17px;
}

.sort-expr {
  margin-left: 17px;
}

.expander {
  position: relative;
  flex: none;
  width: 9px;
  height: 9px;
  margin-right: 5px;
  border: 1px solid #e4e4e4;
  box-sizing: border-box;
  background: linear-gradient(#333, #333) center / 5px 1px no-repeat, linear-gradient(#333, #333) center / 1px 5px no-repeat;
}

.expander.minus {
  background: linear-gradient(#333, #333) center / 5px 1px no-repeat;
}

.expander::after {
  content: "";
  position: absolute;
  left: 8px;
  top: 3px;
  width: 5px;
  border-top: 1px dotted #888;
}

.expander::before {
  content: "";
  position: absolute;
  left: 3px;
  top: 8px;
  height: 12px;
  border-left: 1px dotted #888;
}

.expander.minus::before {
  display: none;
}

.node {
  flex: none;
  width: 16px;
  height: 16px;
}

.node.eye {
  margin-right: 1px;
}

.name {
  font-weight: normal;
  color: #333;
  white-space: nowrap;
}

.name.gap-2 {
  margin-left: 2px;
}

.name.gap-3 {
  margin-left: 3px;
}

.name.muted {
  color: #aaa;
}

.name.bold {
  font-weight: bold;
}

.ball {
  flex: none;
  width: 14px;
  height: 14px;
  margin: 0 1px;
  border: 1px solid #2c8a2c;
  border-radius: 50%;
  box-sizing: border-box;
  background: radial-gradient(circle at 40% 30%, #d8ffd0, #4ec83c 60%, #2d9a2a);
}

.branch {
  position: relative;
  flex: none;
  align-self: flex-start;
  width: 10px;
  height: 20px;
  margin-left: 23px;
  border-left: 1px dotted #777;
  box-sizing: border-box;
}

.branch::after {
  content: "";
  position: absolute;
  left: 0;
  top: 9px;
  width: 9px;
  border-top: 1px dotted #777;
}

.branch.last {
  height: 10px;
}

.tick {
  width: 16px;
  height: 16px;
}

.dep {
  width: 8px;
  height: 14px;
}

.section {
  flex: none;
  display: flex;
  align-items: center;
  height: 24px;
  margin: 0 6px 0 5px;
  padding: 3px 0 0 10px;
  border-bottom: 3px solid #dcdcdc;
  box-sizing: border-box;
  color: #1f7086;
  font-size: 13px;
}

.section-open {
  height: 28px;
  margin: 0;
  padding: 0 0 2px 6px;
  border-bottom: none;
}

.section-last {
  padding-top: 1px;
}

.tri {
  width: 0;
  height: 0;
  margin-right: 9px;
  border-left: 5px solid #1c6b80;
  border-top: 4px solid transparent;
  border-bottom: 4px solid transparent;
}

.tri-down {
  margin-right: 7px;
  border-left: 5px solid transparent;
  border-right: 5px solid transparent;
  border-top: 5px solid #1c6b80;
  border-bottom: none;
}

.details {
  flex: none;
  height: 348px;
  margin: 0 6px 0 5px;
  border: 2px solid #dcdcdc;
  border-top: none;
  box-sizing: border-box;
}

.param-table {
  height: 310px;
  margin: 2px 7px 0 6px;
  border: 1px solid #ddd;
  overflow: hidden;
}

.param {
  display: grid;
  grid-template-columns: 64px 40px 88px 1fr;
  height: 20px;
  border-bottom: 1px solid #e8e8e8;
  box-sizing: border-box;
}

.param:nth-child(odd) {
  background-color: #f8f8f8;
}

.param > span {
  display: flex;
  align-items: center;
  padding-left: 7px;
  border-right: 1px solid #e8e8e8;
}

.param.head {
  background-color: #f0f0f0;
  border-bottom: 1px solid #ddd;
}
```
